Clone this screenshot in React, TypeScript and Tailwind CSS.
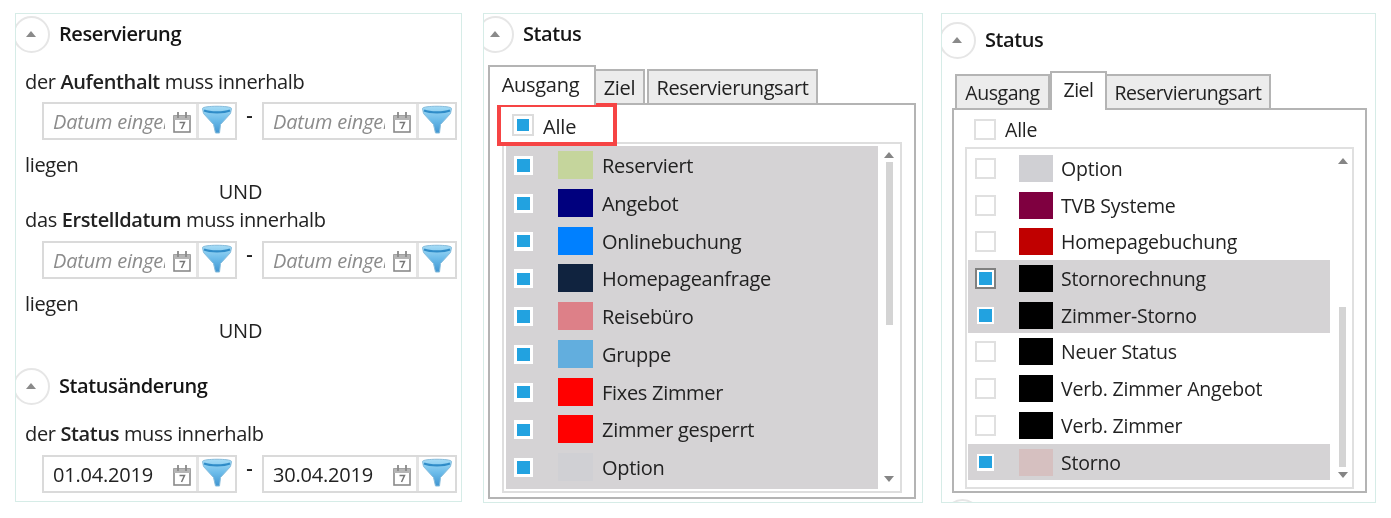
import React from "react";

const font = { fontFamily: '"Open Sans", "Noto Sans", sans-serif' };

function Circle({ className = "" }: { className?: string }) {
  return (
    <div className={"w-[37px] h-[37px] shrink-0 rounded-full border-2 border-[#e6e6e6] bg-white flex items-center justify-center " + className}>
      <svg width="10" height="6" viewBox="0 0 10 6" className="mr-[1px]"><path d="M5 0L10 6H0Z" fill="#8a8a8a" /></svg>
    </div>
  );
}

function Header({ title, className = "", circle = "" }: { title: string; className?: string; circle?: string }) {
  return (
    <div className={"flex items-center h-[40px] " + className}>
      <Circle className={circle} />
      <span className="text-[20px] font-semibold text-[#151515] ml-[9px] tracking-[-0.42px]">{title}</span>
    </div>
  );
}

function Funnel() {
  return (
    <svg width="32" height="30" viewBox="0 0 32 30">
      <defs>
        <linearGradient id="fn" x1="0" y1="0" x2="0" y2="1">
          <stop offset="0" stopColor="#a6dcf6" />
          <stop offset="0.5" stopColor="#6cbcea" />
          <stop offset="1" stopColor="#3f94d0" />
        </linearGradient>
      </defs>
      <path d="M1.5 3.5C1.5 0.5 30.5 0.5 30.5 3.5L29.5 8.5L19.5 19.5L18.5 28H14.5L12.5 19.5L2.5 8.5Z" fill="url(#fn)" stroke="#86bcdc" strokeWidth="1" />
      <path d="M3 5.5C9 8 23 8 29 5.5" fill="none" stroke="#2f8cc8" strokeWidth="2.4" />
    </svg>
  );
}

function Calendar() {
  return (
    <svg width="18" height="22" viewBox="0 0 18 22" className="shrink-0 mt-[1px]">
      <rect x="1" y="5" width="16" height="16" fill="#fff" stroke="#8a8a8a" strokeWidth="1.6" />
      <rect x="1" y="5" width="16" height="4" fill="#b5b5b5" />
      <path d="M5 1V7M13 1V7" stroke="#8a8a8a" strokeWidth="1.8" />
      <path d="M6.5 11.5H11.5L8.5 18" fill="none" stroke="#777" strokeWidth="1.5" />
    </svg>
  );
}

function DateInput({ value }: { value?: string }) {
  return (
    <div className="flex w-[195px] h-[38px] border-2 border-[#dadada]">
      <div className="w-[155px] shrink-0 flex items-center pl-[9px] border-r-[3px] border-[#e4e4e4]">
        <div className="w-[112px] shrink-0 overflow-hidden whitespace-nowrap pt-[1px]">
          {value ? (
            <span className="text-[20px] text-[#222] tracking-[-0.2px]">{value}</span>
          ) : (
            <span className="text-[20px] italic text-[#8c8c8c] tracking-[-0.2px]">Datum eingeben</span>
          )}
        </div>
        <div className="ml-[8px] flex"><Calendar /></div>
      </div>
      <div className="flex-1 flex items-center justify-center -mt-[2px]"><Funnel /></div>
    </div>
  );
}

function DateRow({ value1, value2, className = "" }: { value1?: string; value2?: string; className?: string }) {
  return (
    <div className={"flex h-[38px] ml-[26px] " + className}>
      <DateInput value={value1} />
      <div className="w-[25px] text-center text-[20px] font-semibold text-[#222] -mt-[2px] leading-[30px]">-</div>
      <DateInput value={value2} />
    </div>
  );
}

function Line({ children, className = "" }: { children: React.ReactNode; className?: string }) {
  return <div className={"h-[26px] flex items-center text-[20px] text-[#222] tracking-[-0.36px] whitespace-pre ml-[9px] " + className}>{children}</div>;
}

function LeftPanel() {
  return (
    <div className="w-[447px] h-[489px] border border-[#d6ece7] overflow-hidden shrink-0">
      <Header title="Reservierung" circle="-ml-[3px]" />
      <Line className="mt-[15px]">der <b className="font-semibold">Aufenthalt</b> muss innerhalb</Line>
      <DateRow className="mt-[7px]" />
      <Line className="mt-[12px]">liegen</Line>
      <div className="h-[26px] mt-[1px] flex items-center justify-center text-[20px] text-[#222] pl-[4px] tracking-[-0.2px]">UND</div>
      <Line className="mt-[2px]">das <b className="font-semibold">Erstelldatum</b> muss innerhalb</Line>
      <DateRow className="mt-[8px]" />
      <Line className="mt-[12px]">liegen</Line>
      <div className="h-[26px] mt-[1px] flex items-center justify-center text-[20px] text-[#222] pl-[4px] tracking-[-0.2px]">UND</div>
      <Header title="Statusänderung" className="mt-[22px]" circle="-ml-[3px]" />
      <Line className="mt-[15px]">der <b className="font-semibold">Status</b> muss innerhalb</Line>
      <DateRow className="mt-[8px]" value1="01.04.2019" value2="30.04.2019" />
    </div>
  );
}

function Tab({ label, active, className = "" }: { label: string; active?: boolean; className?: string }) {
  return (
    <div
      className={
        "flex items-center justify-center border-2 border-[#b4b4b4] text-[#222] shrink-0 " +
        (active ? "bg-white border-b-0 relative z-10 pb-[2px] " : "bg-[#ececec] pt-[1px] ") +
        className
      }
    >
      {label}
    </div>
  );
}

type Item = { label: string; color: string; checked?: boolean; focus?: boolean };

const left: Item[] = [
  { label: "Reserviert", color: "#c5d59c", checked: true },
  { label: "Angebot", color: "#00007e", checked: true },
  { label: "Onlinebuchung", color: "#0080ff", checked: true },
  { label: "Homepageanfrage", color: "#10233f", checked: true },
  { label: "Reisebüro", color: "#dd8088", checked: true },
  { label: "Gruppe", color: "#62aede", checked: true },
  { label: "Fixes Zimmer", color: "#ff0000", checked: true },
  { label: "Zimmer gesperrt", color: "#ff0000", checked: true },
  { label: "Option", color: "#d0d0d4", checked: true },
];

const right: Item[] = [
  { label: "Option", color: "#d0d0d4" },
  { label: "TVB Systeme", color: "#7f0040" },
  { label: "Homepagebuchung", color: "#c00000" },
  { label: "Stornorechnung", color: "#000000", checked: true, focus: true },
  { label: "Zimmer-Storno", color: "#000000", checked: true },
  { label: "Neuer Status", color: "#000000" },
  { label: "Verb. Zimmer Angebot", color: "#000000" },
  { label: "Verb. Zimmer", color: "#000000" },
  { label: "Storno", color: "#d6c0c0", checked: true },
];

function Blue() {
  return <div className="w-[12.5px] h-[12.5px] bg-[#22a2e0]" />;
}

function Arrow({ down }: { down?: boolean }) {
  return (
    <svg width="10" height="6" viewBox="0 0 10 6" className={down ? "rotate-180" : ""}>
      <path d="M5 0L10 6H0Z" fill="#858585" />
    </svg>
  );
}

function Panel2() {
  return (
    <div className="w-[440px] h-[490px] border border-[#d6ece7] overflow-hidden shrink-0 ml-[21px]">
      <Header title="Status" circle="-ml-[7px]" />
      <div className="ml-[4px] mt-[11px] flex items-end h-[38px] text-[20px] tracking-[-0.3px]">
        <Tab label="Ausgang" active className="w-[108px] h-[40px] -mb-[2px] pr-[3px]" />
        <Tab label="Ziel" className="w-[49px] h-[34px] border-l-0 border-b-0" />
        <Tab label="Reservierungsart" className="w-[171px] h-[34px] ml-[2px] border-b-0 tracking-[-0.4px]" />
      </div>
      <div className="ml-[4px] w-[428px] h-[396px] border-2 border-[#b4b4b4] relative">
        <div className="absolute left-[7px] -top-[2px] w-[120px] h-[43px] border-4 border-[#f64444]" />
        <div className="h-[37px] pt-[9px] pl-[22px] flex items-start">
          <div className="w-[22px] h-[22px] border-2 border-[#dcdcdc] flex items-center justify-center"><Blue /></div>
          <span className="ml-[9px] mt-[2px] text-[20px] text-[#222] leading-[22px] tracking-[-0.2px]">Alle</span>
        </div>
        <div className="mx-[12px] h-[351px] border-2 border-[#dedede] p-[2px] flex">
          <div className="w-[372px] bg-[#d5d3d5]">
            {left.map((it) => (
              <div key={it.label} className="h-[37.75px] pt-[5px] flex items-start pl-[8px]">
                <div className="w-[19px] h-[19px] mt-[5px] bg-white flex items-center justify-center"><Blue /></div>
                <div className="w-[35px] h-[28px] ml-[25px]" style={{ backgroundColor: it.color }} />
                <span className="ml-[9px] mt-[1px] text-[20px] leading-[28px] text-[#222] tracking-[-0.3px]">{it.label}</span>
              </div>
            ))}
          </div>
          <div className="flex-1 flex flex-col items-center pt-[6px] pb-[7px] pl-[2px]">
            <Arrow />
            <div className="w-[7px] h-[163px] mt-[4px] bg-[#d4d4d4]" />
            <div className="flex-1" />
            <Arrow down />
          </div>
        </div>
      </div>
    </div>
  );
}

function Panel3() {
  return (
    <div className="w-[435px] h-[490px] border border-[#d6ece7] overflow-hidden shrink-0 ml-[18px]">
      <Header title="Status" className="mt-[6px]" circle="-ml-[3px]" />
      <div className="ml-[13px] mt-[10px] flex items-end h-[38px] text-[19.5px] tracking-[-0.45px]">
        <Tab label="Ausgang" className="w-[95px] h-[34px] border-b-0" />
        <Tab label="Ziel" active className="w-[57px] h-[39px] -mb-[2px] pb-[4px]" />
        <Tab label="Reservierungsart" className="w-[164px] h-[34px] border-l-0 border-b-0" />
      </div>
      <div className="ml-[10px] w-[415px] h-[385px] border-2 border-[#b4b4b4]">
        <div className="h-[37px] pt-[9px] pl-[20px] flex items-start">
          <div className="w-[22px] h-[21px] border-2 border-[#e0e0e0]" />
          <span className="ml-[9px] text-[19.5px] text-[#222] leading-[22px] tracking-[-0.2px]">Alle</span>
        </div>
        <div className="ml-[11px] mr-[11px] h-[342px] border-2 border-[#e0e0e0] pt-[1px] pl-[1px] flex">
          <div className="w-[362px]">
            {right.map((it) => (
              <div key={it.label} className={"h-[36.7px] pt-[5px] flex items-start pl-[7px] " + (it.checked ? "bg-[#d5d3d5]" : "")}>
                <div
                  className={
                    "w-[21px] h-[21px] mt-[3px] flex items-center justify-center " +
                    (it.focus ? "border-2 border-[#808080] bg-white" : it.checked ? "" : "border-2 border-[#e0e0e0] bg-white")
                  }
                >
                  {it.checked && (
                    <div className="w-[17px] h-[17px] shrink-0 bg-white flex items-center justify-center"><Blue /></div>
                  )}
                </div>
                <div className="w-[34px] h-[27px] ml-[23px]" style={{ backgroundColor: it.color }} />
                <span className="ml-[8px] text-[19.5px] leading-[27px] text-[#222] tracking-[-0.2px]">{it.label}</span>
              </div>
            ))}
          </div>
          <div className="flex-1 flex flex-col items-center pt-[8px] pb-[9px] pl-[3px]">
            <Arrow />
            <div className="w-[7px] h-[160px] mt-[143px] bg-[#d4d4d4]" />
            <div className="mt-[5px]"><Arrow down /></div>
          </div>
        </div>
      </div>
      <Circle className="mt-[6px] ml-[2px]" />
    </div>
  );
}

export default function App() {
  return (
    <div className="w-[1391px] h-[518px] bg-white overflow-hidden flex pt-[13px] pl-[15px] blur-[0.35px]" style={font}>
      <LeftPanel />
      <Panel2 />
      <Panel3 />
    </div>
  );
}
